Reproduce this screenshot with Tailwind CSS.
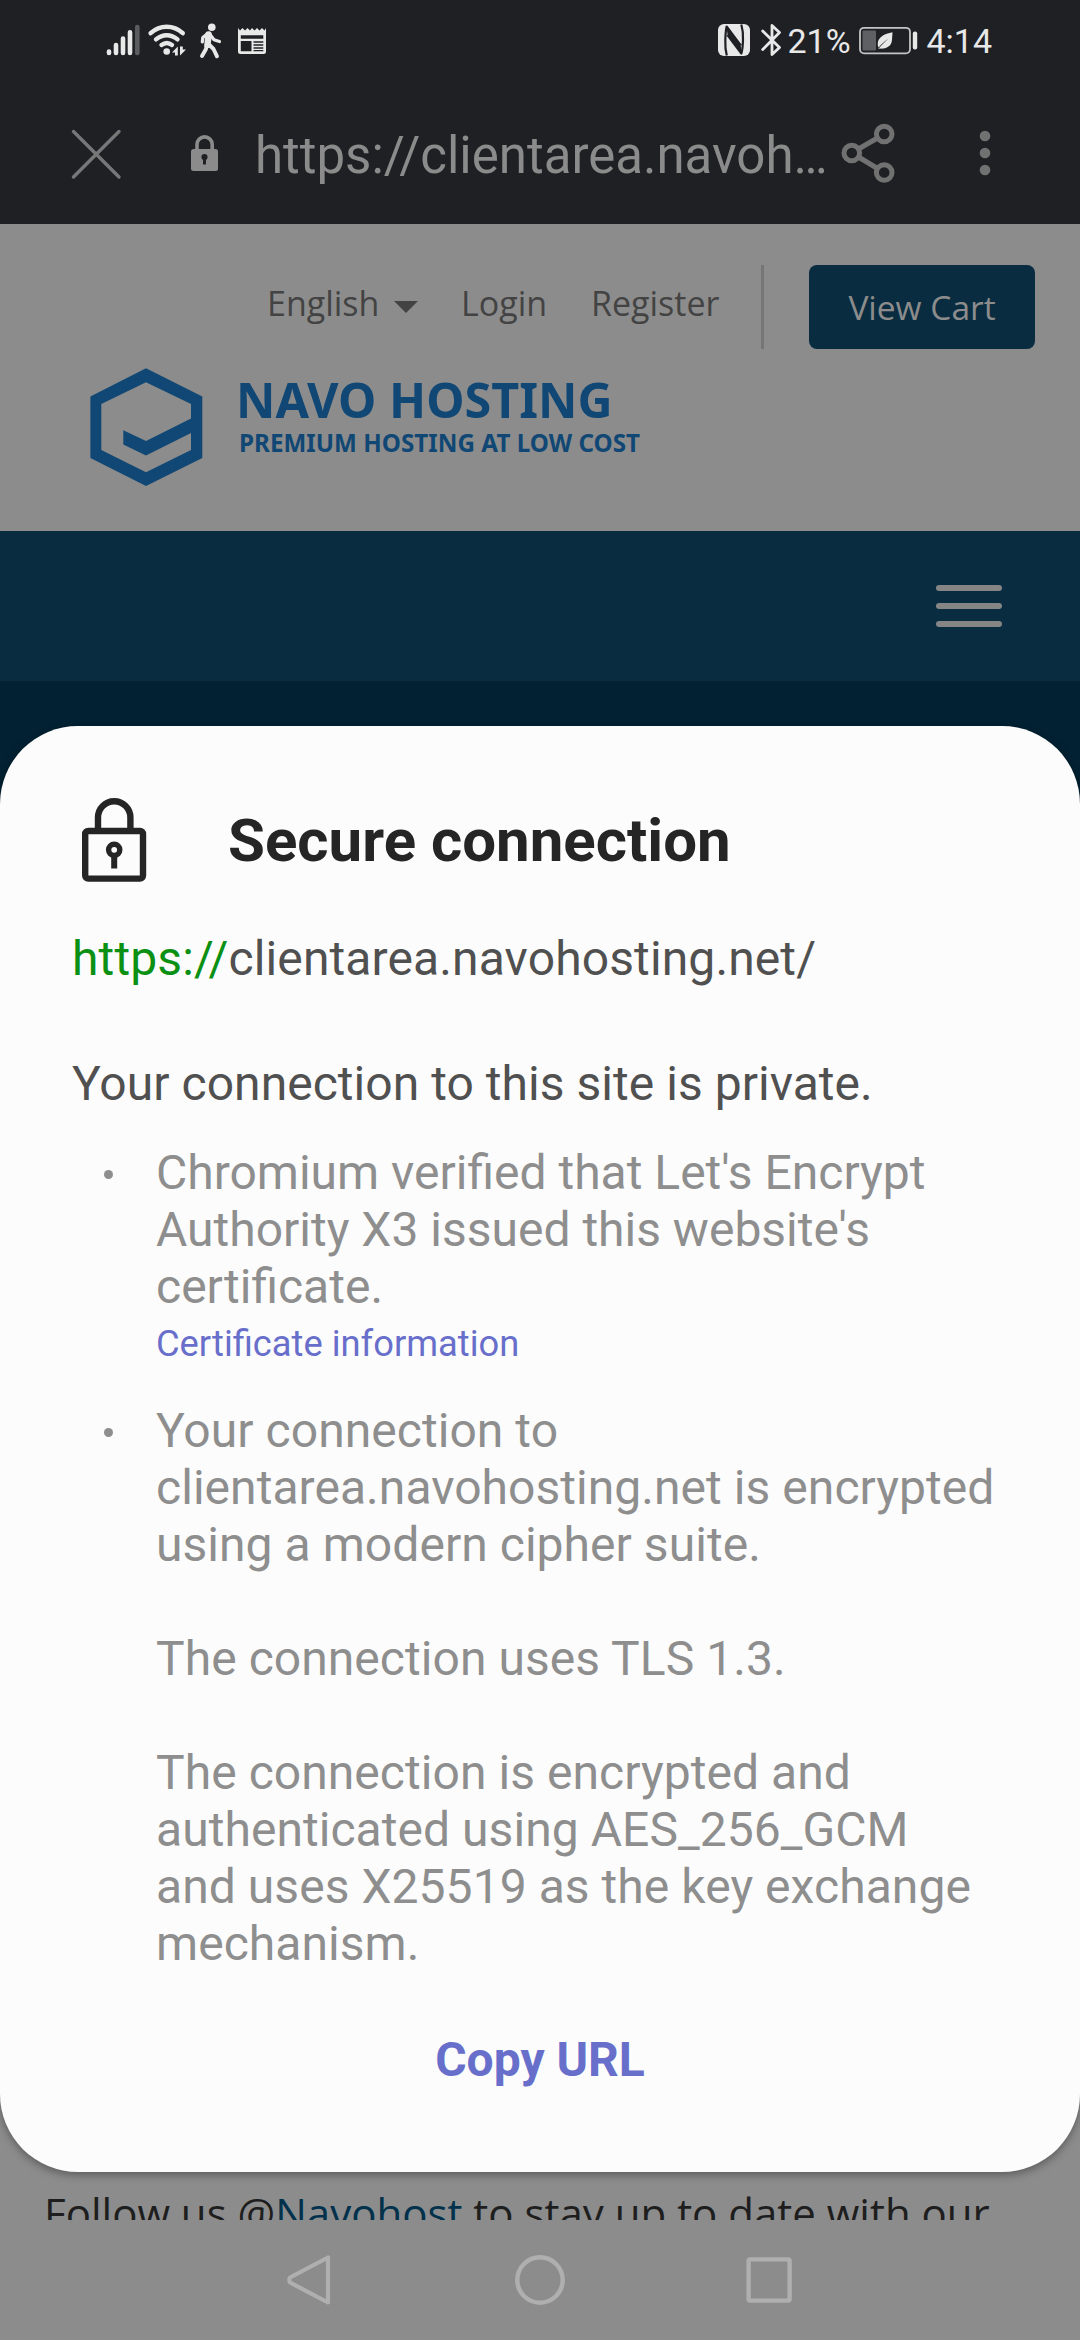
<!DOCTYPE html>
<html lang="en">
<head>
<meta charset="utf-8">
<title>Navo Hosting</title>
<script src="https://cdn.jsdelivr.net/npm/@tailwindcss/browser@4"></script>
</head>
<body class="bg-[#8c8c8c]">
<div class="relative flex h-[2340px] w-[1080px] flex-col overflow-hidden bg-[#8c8c8c] font-['Roboto',sans-serif]">

  <!-- Status bar -->
  <div class="flex h-20 shrink-0 items-center bg-[#1f2024] pt-[2px] pr-[88px] pl-[105px] text-[34px] leading-none text-[#e8e8e8]">
    <svg class="h-[40px] w-[37px] -translate-y-px" viewBox="105 20 37 40" fill="none" stroke="currentColor" stroke-width="4.6" stroke-linecap="round">
      <path d="M109 51.5V53M116 45V53M123 38.5V53M130 32.3V53"/><path d="M137.3 27V53" stroke="#5b5c5f"/>
    </svg>
    <svg class="ml-[5px] h-[40px] w-[40px] -translate-y-px" viewBox="147 20 40 40" fill="none" stroke="currentColor" stroke-width="4.4" stroke-linecap="round">
      <path d="M150.6 33.2C160 24.6 173.500 24.6 182.800 33.200M156 39.400C162.500 33.800 171 33.800 177.500 39.400M161.500 45C165 42.300 168.600 42.300 172 45"/>
      <circle cx="166.700" cy="51.500" r="3.300" fill="currentColor" stroke="none"/>
      <path d="M172 52.500L177.800 46.500V55.500H175V52.500ZM180 46.500H182.800V49.500H186L180 55.500Z" fill="currentColor" stroke="none"/>
    </svg>
    <svg class="ml-[11px] h-[40px] w-[26px] -translate-y-px" viewBox="198 20 26 40" fill="none" stroke="currentColor" stroke-linecap="round" stroke-linejoin="round">
      <circle cx="211.800" cy="27.300" r="3.800" fill="currentColor" stroke="none"/>
      <path d="M208.500 34.500L207.500 45" stroke-width="6.500"/>
      <path d="M206.500 34.500L202.800 37.500L202.300 42M210 34.500L214 39.800L219.500 41.500" stroke-width="3.200"/>
      <path d="M206.800 44L206 49L202 56M208.500 44L213.500 49L217 56.300" stroke-width="3.900"/>
    </svg>
    <svg class="ml-[13px] h-[40px] w-[30px] -translate-y-px" viewBox="237 20 30 40">
      <path d="M238 28L240 30.500L242.500 28L245 30.500L247.500 28L250 30.500L252 28L254.500 30.500L257 28L259.500 30.500L262 28L264.500 30.500L266 28V51.500Q266 54 263.500 54H240.500Q238 54 238 51.500Z" fill="currentColor"/>
      <path d="M240.800 35.300H263.300V38.800H240.800ZM240.800 41H251.500V51.300H240.800ZM253.500 41.200H263.300V42.700H253.500ZM253.500 44.200H263.300V45.700H253.500ZM253.500 47.200H263.300V48.700H253.500ZM253.500 50.100H263.300V51.300H253.500Z" fill="#1f2024"/>
    </svg>
    <svg class="ml-auto h-[40px] w-[34px] -translate-y-px" viewBox="718 20 34 40">
      <rect x="719" y="24" width="32" height="32" rx="6" fill="currentColor"/>
      <path d="M727.800 55.500Q726 49 726.300 40T727.600 26.500L741.800 45.500M742.300 24.500Q744.300 31 744 40T742.400 53.500L728.500 35" fill="none" stroke="#1f2024" stroke-width="2.200" stroke-linejoin="round"/>
      <path d="M727.500 27L742 46.500V53L728.500 34.500Z" fill="#1f2024"/>
    </svg>
    <svg class="ml-[9px] h-[40px] w-[22px] -translate-y-px" viewBox="760 20 22 40" fill="none" stroke="currentColor" stroke-width="2.800" stroke-linecap="round" stroke-linejoin="round">
      <path d="M762.700 31L779.500 47.500L772 54.500V25.500L779.500 32.500L762.700 49.500"/>
    </svg>
    <span class="ml-[5px] w-[63px]">21%</span>
    <svg class="ml-[7px] h-[40px] w-[62px] -translate-y-px" viewBox="857 20 62 40">
      <rect x="860" y="27.800" width="50" height="25.500" rx="4" fill="none" stroke="#c4c4c5" stroke-width="1.800"/>
      <rect x="862.500" y="30.500" width="13.500" height="20" rx="1" fill="#5f6063"/>
      <rect x="912.800" y="31.500" width="4.400" height="18" rx="2" fill="currentColor"/>
      <path d="M892.500 32.300C884 34 878.500 37 877.800 43C877.600 45 878 46.500 878.600 47.500C882 43.500 885 41 888.500 38.500C885 42 881.500 45 878 49.300L879.800 48.600C886 49 891.500 46.500 892 40Z" fill="currentColor"/>
    </svg>
    <span class="ml-[7px]">4:14</span>
  </div>

  <!-- Browser toolbar -->
  <div class="flex h-36 shrink-0 items-center bg-[#1f2024] pl-[70px] text-[#8b8b8b]">
    <svg class="mt-[3px] h-[52px] w-[52px]" viewBox="70 128 52 52" stroke="#777778" stroke-width="3.400" stroke-linecap="round"><path d="M73.500 131.500L119 177M119 131.500L73.500 177"/></svg>
    <svg class="mt-[2px] ml-[68px] h-[38px] w-[30px]" viewBox="190 134 30 38">
      <path d="M197 150V144.500a7.600 7.600 0 0 1 15.200 0V150" fill="none" stroke="currentColor" stroke-width="3.600"/>
      <rect x="191" y="149" width="27" height="22" rx="2.500" fill="currentColor"/>
      <circle cx="204.500" cy="157" r="3.100" fill="#1f2024"/><path d="M203 157H206V164.500H203Z" fill="#1f2024"/>
    </svg>
    <span class="mt-[7px] ml-[35px] w-[586px] text-[51px] leading-[60px] whitespace-nowrap">https://clientarea.navoh…</span>
    <svg class="mt-[2px] h-[62px] w-[56px]" viewBox="840 122 56 62" fill="none" stroke="#717172" stroke-width="5">
      <circle cx="850.800" cy="153" r="7.800"/><circle cx="883.200" cy="134" r="7.800"/><circle cx="883.200" cy="172.500" r="7.800"/>
      <path d="M857.500 149L876.500 138M857.500 157L876.500 168.500"/>
    </svg>
    <svg class="mt-[2px] ml-[82px] h-[48px] w-[12px]" viewBox="978 129 12 48" fill="#717172"><circle cx="984" cy="136" r="5.300"/><circle cx="984" cy="153" r="5.300"/><circle cx="984" cy="170" r="5.300"/></svg>
  </div>

  <!-- Site header -->
  <header class="flex h-[307px] shrink-0 flex-col pt-[41px] font-['Open_Sans',sans-serif] text-[34px] text-[#434343]">
    <nav class="flex h-[84px] items-center pr-[45px] pl-[267px]">
      <span class="-mt-[7px] w-[112px]">English</span>
      <svg class="-mt-[1px] ml-[15px] h-[12px] w-[24px]" viewBox="0 0 24 12" fill="#434343"><path d="M0 0H24L12 12Z"/></svg>
      <span class="-mt-[7px] ml-[43px] w-[86px]">Login</span>
      <span class="-mt-[7px] ml-[44px] w-[128px]">Register</span>
      <span class="ml-[42px] h-[84px] w-[3px] bg-[#767676]"></span>
      <span class="ml-auto flex h-[84px] w-[226px] items-center justify-center rounded-[8px] bg-[#092c41] text-[33.500px] whitespace-nowrap text-[#8c8c8c]">View Cart</span>
    </nav>
    <div class="mt-[18px] flex pl-[90px] font-['Noto_Sans',sans-serif] font-bold text-[#104774]">
      <svg class="h-[120px] w-[113px]" viewBox="90 367 113 120" fill="currentColor" fill-rule="evenodd">
        <path d="M146 368.300L202.300 396.500V458L146 486L90.400 458V396.500ZM146 382.300L101.300 404V450L146 472.300L191 450V433L146 455.500L123.300 444.500V430.300L146 441L191 418.500V404Z"/>
      </svg>
      <div class="ml-[33px] flex flex-col pt-[8px] whitespace-nowrap">
        <span class="text-[48.500px] leading-[48px]">NAVO HOSTING</span>
        <span class="mt-[4px] ml-[3px] text-[24.200px] leading-[32px] tracking-[0.03px]">PREMIUM HOSTING AT LOW COST</span>
      </div>
    </div>
  </header>

  <div class="flex h-[150px] shrink-0 items-center justify-end bg-[#092c41] pr-[78px]">
    <div class="flex flex-col gap-[12px]">
      <span class="h-[6px] w-[66px] rounded-[3px] bg-[#858585]"></span>
      <span class="h-[6px] w-[66px] rounded-[3px] bg-[#858585]"></span>
      <span class="h-[6px] w-[66px] rounded-[3px] bg-[#858585]"></span>
    </div>
  </div>
  <div class="h-[160px] shrink-0 bg-[#022132]"></div>

  <!-- Page content, clipped by the navigation bar -->
  <main class="flex h-[1379px] shrink-0 flex-col justify-end overflow-hidden pl-[44px] font-['Open_Sans',sans-serif] text-[42px] text-[#1e1e1e]">
    <p class="-mb-[25px] leading-[64px] whitespace-nowrap">Follow us @<span class="text-[#02314c]">Navohost</span> to stay up to date with our</p>
  </main>

  <!-- System navigation -->
  <div class="flex h-[120px] shrink-0 items-center pl-[286px]">
    <svg class="h-[52px] w-[46px]" viewBox="286 2254 46 52" fill="none" stroke="#afafaf" stroke-width="4.200" stroke-linejoin="round"><path d="M328 2257.500V2302.500L290 2282.500Q288.500 2280 290 2277.500Z"/></svg>
    <svg class="ml-[182px] h-[52px] w-[52px]" viewBox="514 2254 52 52" fill="none" stroke="#afafaf" stroke-width="4.400"><circle cx="540" cy="2280" r="22.700"/></svg>
    <svg class="ml-[179px] h-[48px] w-[48px]" viewBox="745 2256 48 48" fill="none" stroke="#afafaf" stroke-width="4.400"><rect x="748.600" y="2259.400" width="41" height="41.200" rx="1.500"/></svg>
  </div>

  <!-- Connection details sheet -->
  <section class="absolute top-[726px] left-0 flex h-[1446px] w-[1080px] flex-col rounded-[78px] bg-[#fcfcfc] pt-[72px] pl-[72px] text-[48px] leading-[57px] whitespace-nowrap text-[#505050] shadow-[0_3px_8px_rgba(0,0,0,0.35)]">
    <div class="flex h-[84px] items-center pl-[9px]">
      <svg class="h-[84px] w-[66px]" viewBox="81 798 66 84" fill="none" stroke="#252525" stroke-width="6.400">
        <rect x="85.200" y="831" width="57.800" height="47.600" rx="3"/>
        <path d="M98 831V817.500a16.200 16.200 0 0 1 32.400 0V831"/>
        <circle cx="114.200" cy="849.800" r="5.600" stroke-width="5.400"/><path d="M114.200 855V868.500" stroke-width="6"/>
      </svg>
      <h1 class="mt-[2px] ml-[81px] text-[60px] leading-[80px] font-bold text-[#252525]">Secure connection</h1>
    </div>
    <p class="mt-[48px] tracking-[0.12px]"><span class="text-[#0b9013]">https://</span>clientarea.navohosting.net/</p>
    <p class="mt-[68px] tracking-[0.04px]">Your connection to this site is private.</p>
    <ul class="mt-[32px] text-[#8e8e8e]">
      <li class="flex">
        <span class="mt-[26px] ml-[32px] h-[9px] w-[9px] rounded-full bg-[#8e8e8e]"></span>
        <div class="ml-[43px] flex flex-col">
          <p>Chromium verified that Let's Encrypt<br>Authority X3 issued this website's<br>certificate.</p>
          <a class="text-[36.300px] text-[#686fcb]">Certificate information</a>
        </div>
      </li>
      <li class="mt-[30px] flex">
        <span class="mt-[26px] ml-[32px] h-[9px] w-[9px] rounded-full bg-[#8e8e8e]"></span>
        <div class="ml-[43px] flex flex-col gap-[57px] tracking-[0.05px]">
          <p>Your connection to<br>clientarea.navohosting.net is encrypted<br>using a modern cipher suite.</p>
          <p>The connection uses TLS 1.3.</p>
          <p>The connection is encrypted and<br>authenticated using AES_256_GCM<br>and uses X25519 as the key exchange<br>mechanism.</p>
        </div>
      </li>
    </ul>
    <button class="mt-[59px] -ml-[72px] text-center font-bold text-[#686fcb]">Copy URL</button>
  </section>
</div>
</body>
</html>
